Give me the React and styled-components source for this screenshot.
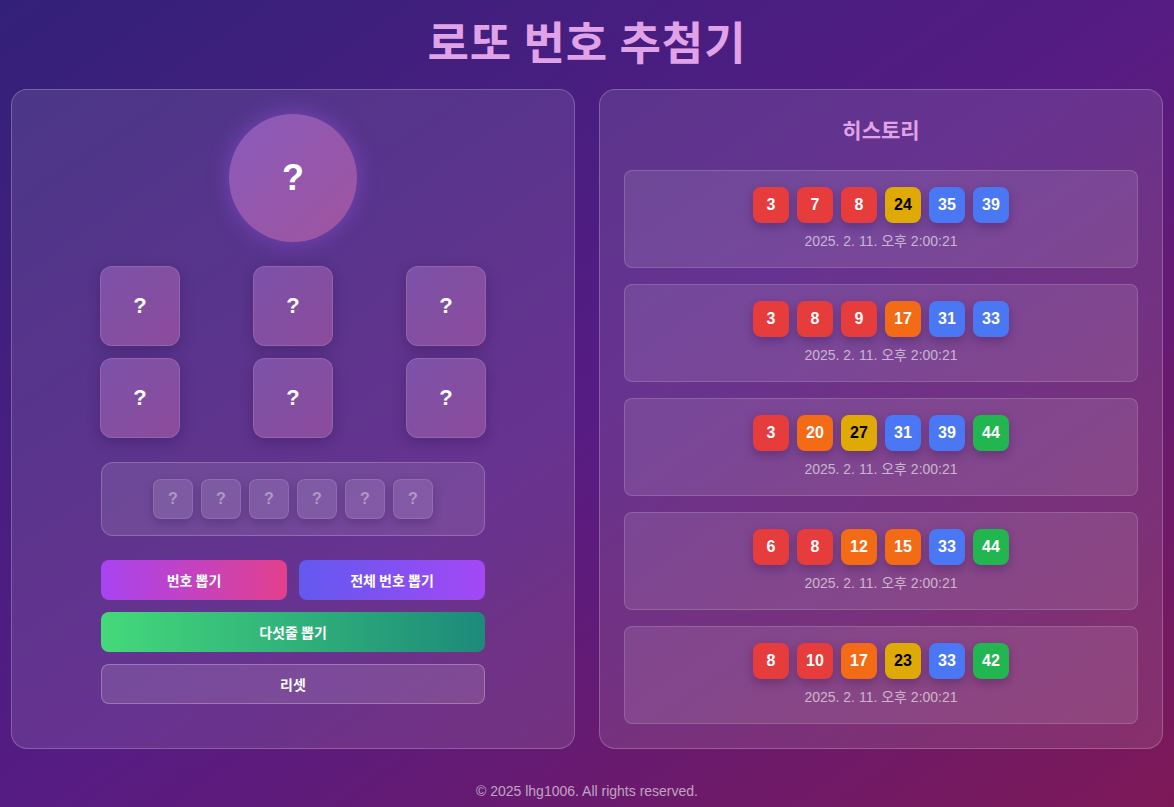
import React from 'react';
import styled, { createGlobalStyle } from 'styled-components';

const GlobalStyle = createGlobalStyle`
  * { box-sizing: border-box; }
  body {
    margin: 0;
    font-family: "Liberation Sans", "Noto Sans CJK KR", Arial, sans-serif;
  }
`;

const Page = styled.div`
  min-height: 100vh;
  padding: 17px 11px 7px;
  background: linear-gradient(to bottom right, #332179 0%, #561c84 50%, #7d1857 100%);
  display: flex;
  flex-direction: column;
  align-items: center;
`;

const Title = styled.h1`
  margin: 0 0 24px;
  font-family: "Noto Sans CJK KR", sans-serif;
  font-size: 45px;
  line-height: 48px;
  font-weight: 700;
  color: #e0a3e8;
  letter-spacing: 1px;
`;

const Columns = styled.div`
  width: 1152px;
  display: grid;
  grid-template-columns: 1fr 1fr;
  gap: 24px;
`;

const Panel = styled.section`
  background: rgba(255, 255, 255, 0.1);
  border: 1px solid rgba(255, 255, 255, 0.22);
  border-radius: 16px;
  padding: 24px;
  display: flex;
  flex-direction: column;
  align-items: center;
`;

const BigBall = styled.div`
  width: 128px;
  height: 128px;
  border-radius: 50%;
  background: linear-gradient(to bottom right, #8a5bbc, #a0549d);
  box-shadow: 0 0 22px rgba(160, 90, 240, 0.45);
  display: flex;
  align-items: center;
  justify-content: center;
  color: #fff;
  font-size: 36px;
  font-weight: 700;
`;

const BoxGrid = styled.div`
  width: 386px;
  margin-top: 24px;
  display: grid;
  grid-template-columns: repeat(3, 80px);
  justify-content: space-between;
  row-gap: 12px;
`;

const Box = styled.div`
  width: 80px;
  height: 80px;
  border-radius: 12px;
  background: linear-gradient(to bottom right, #7b52a9, #8c4b9b);
  border: 1px solid rgba(255, 255, 255, 0.12);
  box-shadow: 0 4px 14px rgba(40, 10, 70, 0.3);
  display: flex;
  align-items: center;
  justify-content: center;
  color: #fff;
  font-size: 22px;
  font-weight: 700;
`;

const SlotTray = styled.div`
  width: 384px;
  height: 74px;
  margin-top: 24px;
  border-radius: 12px;
  background: rgba(255, 255, 255, 0.1);
  border: 1px solid rgba(255, 255, 255, 0.2);
  display: flex;
  align-items: center;
  justify-content: center;
  gap: 8px;
`;

const Slot = styled.div`
  width: 40px;
  height: 40px;
  border-radius: 8px;
  background: rgba(255, 255, 255, 0.1);
  border: 1px solid rgba(255, 255, 255, 0.12);
  box-shadow: 0 4px 10px rgba(40, 10, 70, 0.25);
  display: flex;
  align-items: center;
  justify-content: center;
  color: rgba(255, 255, 255, 0.4);
  font-size: 16px;
  font-weight: 700;
`;

const Buttons = styled.div`
  width: 384px;
  margin-top: 24px;
  display: grid;
  grid-template-columns: 1fr 1fr;
  gap: 12px;
`;

const Button = styled.button`
  grid-column: ${(p) => (p.$wide ? 'span 2' : 'auto')};
  height: 40px;
  border-radius: 8px;
  border: ${(p) => (p.$ghost ? '1px solid rgba(255,255,255,0.25)' : 'none')};
  background: ${(p) => p.$bg};
  color: #fff;
  font-family: "Noto Sans CJK KR", sans-serif;
  font-size: 14px;
  font-weight: 700;
  cursor: pointer;
`;

const HistoryTitle = styled.h2`
  margin: 0 0 26px;
  font-family: "Noto Sans CJK KR", sans-serif;
  font-size: 21px;
  line-height: 30px;
  font-weight: 700;
  color: #e0a3e8;
`;

const HistoryList = styled.div`
  width: 100%;
  display: flex;
  flex-direction: column;
  gap: 16px;
`;

const HistoryItem = styled.div`
  border-radius: 8px;
  background: rgba(255, 255, 255, 0.1);
  border: 1px solid rgba(255, 255, 255, 0.15);
  padding: 16px;
  display: flex;
  flex-direction: column;
  align-items: center;
`;

const BallRow = styled.div`
  display: flex;
  gap: 8px;
`;

const Ball = styled.div`
  width: 36px;
  height: 36px;
  border-radius: 8px;
  background: ${(p) => p.$bg};
  color: ${(p) => p.$fg};
  box-shadow: 0 4px 10px rgba(40, 10, 70, 0.3);
  display: flex;
  align-items: center;
  justify-content: center;
  font-size: 16px;
  font-weight: 700;
`;

const DateText = styled.div`
  margin-top: 8px;
  font-family: "Liberation Sans", "Noto Sans CJK KR", sans-serif;
  font-size: 14px;
  line-height: 20px;
  color: rgba(255, 255, 255, 0.6);
`;

const Footer = styled.footer`
  margin-top: 32px;
  font-size: 14px;
  line-height: 20px;
  color: rgba(255, 255, 255, 0.6);
`;

const ballColor = (n) => {
  if (n <= 10) return ['#e63c3c', '#fff'];
  if (n <= 20) return ['#f46b16', '#fff'];
  if (n <= 30) return ['#e0aa06', '#000'];
  if (n <= 40) return ['#4a78f5', '#fff'];
  return ['#22b650', '#fff'];
};

const history = [
  [3, 7, 8, 24, 35, 39],
  [3, 8, 9, 17, 31, 33],
  [3, 20, 27, 31, 39, 44],
  [6, 8, 12, 15, 33, 44],
  [8, 10, 17, 23, 33, 42],
];

export default function App() {
  return (
    <>
      <GlobalStyle />
      <Page>
        <Title>로또 번호 추첨기</Title>
        <Columns>
          <Panel>
            <BigBall>?</BigBall>
            <BoxGrid>
              {Array.from({ length: 6 }).map((_, i) => (
                <Box key={i}>?</Box>
              ))}
            </BoxGrid>
            <SlotTray>
              {Array.from({ length: 6 }).map((_, i) => (
                <Slot key={i}>?</Slot>
              ))}
            </SlotTray>
            <Buttons>
              <Button $bg="linear-gradient(to right, #a744f2, #e2408c)">번호 뽑기</Button>
              <Button $bg="linear-gradient(to right, #6359ef, #a348f4)">전체 번호 뽑기</Button>
              <Button $wide $bg="linear-gradient(to right, #44d97a, #1d8a7a)">다섯줄 뽑기</Button>
              <Button $wide $ghost $bg="rgba(255,255,255,0.12)">리셋</Button>
            </Buttons>
          </Panel>
          <Panel>
            <HistoryTitle>히스토리</HistoryTitle>
            <HistoryList>
              {history.map((row, i) => (
                <HistoryItem key={i}>
                  <BallRow>
                    {row.map((n) => {
                      const [bg, fg] = ballColor(n);
                      return (
                        <Ball key={n} $bg={bg} $fg={fg}>
                          {n}
                        </Ball>
                      );
                    })}
                  </BallRow>
                  <DateText>2025. 2. 11. 오후 2:00:21</DateText>
                </HistoryItem>
              ))}
            </HistoryList>
          </Panel>
        </Columns>
        <Footer>© 2025 lhg1006. All rights reserved.</Footer>
      </Page>
    </>
  );
}
